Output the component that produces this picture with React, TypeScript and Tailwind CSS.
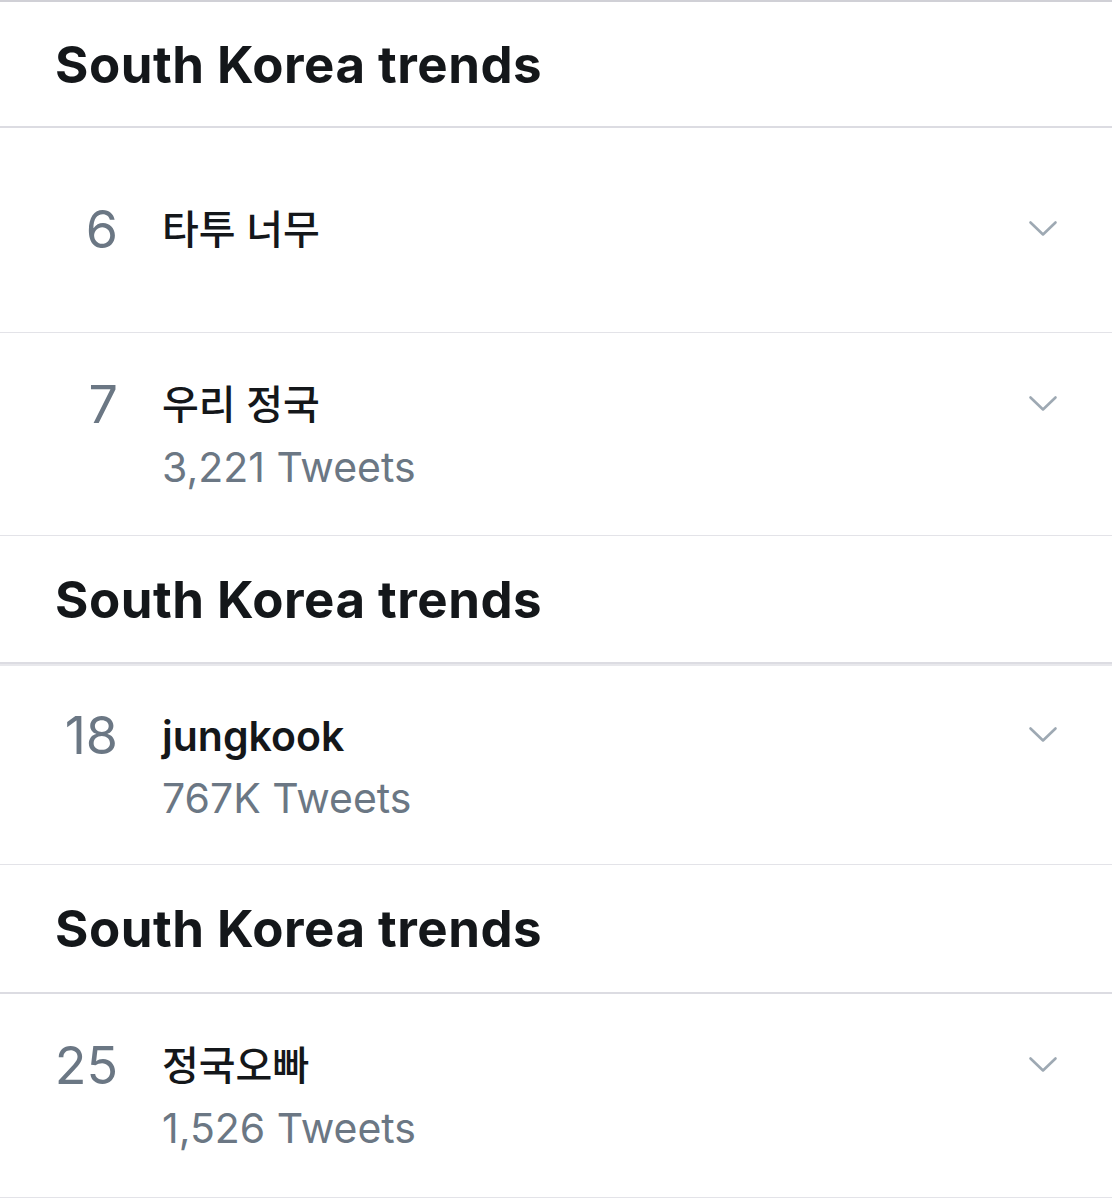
import React from "react";

const font = { fontFamily: 'Inter, "Noto Sans CJK KR", sans-serif' };

function Chevron() {
  return (
    <svg width="30" height="18" viewBox="0 0 30 18" className="text-[#9ea9b3]">
      <polyline points="2.5,2.5 15,14.5 27.5,2.5" fill="none" stroke="currentColor" strokeWidth="2.6" strokeLinecap="round" strokeLinejoin="round" />
    </svg>
  );
}

function Header({ h = "h-[126px]" }: { h?: string }) {
  return (
    <div className={`${h} flex items-center pl-[55px] border-b-2 border-[#dcdce2]`}>
      <h2 className="text-[51px] font-bold text-[#14171a] tracking-[0.5px] leading-none">South Korea trends</h2>
    </div>
  );
}

function Row({ n, title, count, semibold, h = "h-[203px]" }: { n: string; title: string; count?: string; semibold?: boolean; h?: string }) {
  return (
    <div className={`${h} flex items-center border-b border-[#e3e3e8]`}>
      <div className="flex items-start w-full">
        <div className="w-[118px] text-right text-[52px] leading-[56px] text-[#6b7784] font-normal">{n}</div>
        <div className="ml-[44px] flex-1">
          <div className={`${semibold ? "text-[41px] font-semibold" : "text-[40px] font-medium"} leading-[56px] text-[#14171a]`}>{title}</div>
          {count && <div className="text-[41px] leading-[50px] mt-[9px] text-[#6b7784]">{count}</div>}
        </div>
        <div className="pr-[54px] pt-[18px]"><Chevron /></div>
      </div>
    </div>
  );
}

export default function App() {
  return (
    <div className="w-[1112px] h-[1200px] bg-white overflow-hidden" style={font}>
      <div className="border-t-2 border-[#d0d0d6]" />
      <Header />
      <Row n="6" title="타투 너무" h="h-[205px]" />
      <Row n="7" title="우리 정국" count="3,221 Tweets" />
      <Header h="h-[128px]" />
      <div className="border-t-2 border-[#e8e8ec]" />
      <Row n="18" title="jungkook" count="767K Tweets" semibold h="h-[199px]" />
      <Header h="h-[129px]" />
      <Row n="25" title="정국오빠" count="1,526 Tweets" h="h-[204px]" />
    </div>
  );
}
